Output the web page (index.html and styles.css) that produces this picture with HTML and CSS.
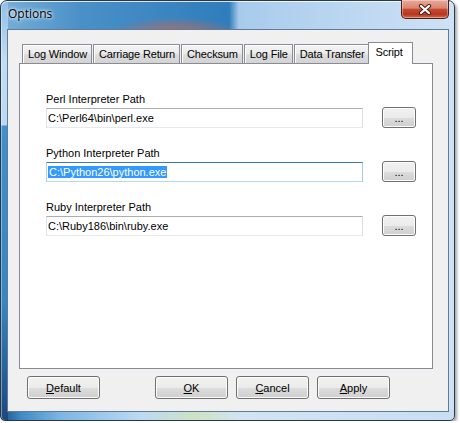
FILE: index.html
```html
<!DOCTYPE html>
<html lang="en">
<head>
    <meta charset="UTF-8">
    <title>Options</title>
    <link rel="stylesheet" href="styles.css">
</head>
<body>
    <div class="window">
        <div class="titlebar">
            <span class="title">Options</span>
            <button class="close" type="button" aria-label="Close">
                <svg width="14" height="11" viewBox="0 0 14 11">
                    <path d="M3 2 L11 9 M11 2 L3 9" stroke="#4a2019" stroke-width="4.2" stroke-linecap="round"/>
                    <path d="M3 2 L11 9 M11 2 L3 9" stroke="#fff" stroke-width="2.2" stroke-linecap="round"/>
                </svg>
            </button>
        </div>

        <div class="client">
            <!-- Tabs -->
            <div class="tab-strip">
                <span class="tab">Log Window</span>
                <span class="tab">Carriage Return</span>
                <span class="tab">Checksum</span>
                <span class="tab">Log File</span>
                <span class="tab">Data Transfer</span>
                <span class="tab active">Script</span>
            </div>

            <div class="panel">
                <div class="field">
                    <label>Perl Interpreter Path</label>
                    <div class="field-row">
                        <div class="textbox">C:\Perl64\bin\perl.exe</div>
                        <button class="btn browse" type="button">...</button>
                    </div>
                </div>
                <div class="field">
                    <label>Python Interpreter Path</label>
                    <div class="field-row">
                        <div class="textbox focused"><span class="selected">C:\Python26\python.exe</span></div>
                        <button class="btn browse" type="button">...</button>
                    </div>
                </div>
                <div class="field">
                    <label>Ruby Interpreter Path</label>
                    <div class="field-row">
                        <div class="textbox">C:\Ruby186\bin\ruby.exe</div>
                        <button class="btn browse" type="button">...</button>
                    </div>
                </div>
            </div>

            <!-- Dialog buttons -->
            <div class="actions">
                <button class="btn btn-default" type="button"><u>D</u>efault</button>
                <button class="btn" type="button"><u>O</u>K</button>
                <button class="btn" type="button"><u>C</u>ancel</button>
                <button class="btn" type="button"><u>A</u>pply</button>
            </div>
        </div>
    </div>
</body>
</html>
```

FILE: styles.css
```css
body {
    margin: 0;
    background: #fff;
    font-family: "Liberation Sans", Arial, sans-serif;
    font-size: 11px;
    color: #000;
}
.window {
    box-sizing: border-box;
    width: 455px;
    height: 421px;
    border: 1px solid #27384a;
    border-radius: 7px 7px 5px 5px;
    padding: 0 5px 8px 6px;
    display: flex;
    flex-direction: column;
    background:
        radial-gradient(ellipse 66px 17px at 175px 33px, rgba(196, 104, 84, 0.95), rgba(196, 104, 84, 0) 100%) 0 0 / 100% 40px no-repeat,
        linear-gradient(to bottom, #8fc0e6 0, #c2ddf2 60px, #bad8f0 124px, #3f90cd 125px, #3686c4 300px, #1c477c 100%) 0 0 / 7px 100% no-repeat,
        linear-gradient(to right, #1f4f86 0, #3f8ac6 20px, #7db6e3 60px, #bcdaf2 140px, #cde2c4 195px, #d2e4f2 240px, #c7def4 100%) 0 100% / 100% 10px no-repeat,
        linear-gradient(to right, #78afd8 0, #4a90c8 80px, #2f7dbc 228px, #a8cbec 238px, #b3d2ef 300px, #cfe2f5 100%);
    box-shadow: inset 0 1px 0 rgba(255, 255, 255, 0.8), inset 1px 0 0 rgba(255, 255, 255, 0.4), 2px 2px 3px rgba(0, 0, 0, 0.35);
}
.titlebar {
    height: 28px;
    display: flex;
    align-items: flex-start;
}
.title {
    font-family: "Open Sans", "Noto Sans", sans-serif;
    font-size: 12px;
    line-height: 16px;
    margin: 5px 0 0 1px;
    text-shadow: 0 0 5px #fff, 0 0 3px rgba(255, 255, 255, 0.9);
}
.close {
    margin: -1px 0 0 auto;
    width: 48px;
    height: 19px;
    padding: 0;
    border: 1px solid #4b1e18;
    border-top: none;
    border-radius: 0 0 5px 5px;
    background: linear-gradient(#e8aa9a 0%, #d98470 45%, #c54a33 52%, #b8361f 80%, #d46c4e 100%);
    box-shadow: inset 0 0 0 1px rgba(255, 255, 255, 0.35);
    display: flex;
    align-items: center;
    justify-content: center;
}
.client {
    flex: 1;
    background: #f0f0f0;
    border: 1px solid #5f7b98;
    padding: 12px 0 0 11px;
    display: flex;
    flex-direction: column;
}
.tab-strip {
    display: flex;
    align-items: flex-end;
    height: 21px;
    padding-left: 3px;
}
.tab {
    box-sizing: border-box;
    height: 19px;
    line-height: 18px;
    padding: 0 4px 0 5px;
    border: 1px solid #898c95;
    border-bottom: none;
    background: linear-gradient(#f3f3f3 0%, #ececec 45%, #dddddd 55%, #d3d3d3 100%);
    box-shadow: inset 1px 1px 0 #fff;
    white-space: nowrap;
    letter-spacing: -0.15px;
}
.tab + .tab {
    margin-left: 1px;
}
.tab.active {
    position: relative;
    z-index: 1;
    height: 22px;
    line-height: 19px;
    margin: 0 0 -1px -1px;
    padding: 0 9px 0 6px;
    background: #fff;
    box-shadow: none;
}
.panel {
    box-sizing: border-box;
    width: 414px;
    height: 306px;
    background: #fff;
    border: 1px solid #898c95;
    padding: 29px 0 0 26px;
    display: flex;
    flex-direction: column;
    gap: 19px;
}
.field label {
    display: block;
    line-height: 13px;
    margin-bottom: 1px;
}
.field-row {
    display: flex;
    align-items: center;
    gap: 19px;
}
.textbox {
    box-sizing: border-box;
    width: 317px;
    height: 20px;
    line-height: 18px;
    padding: 0 1px;
    border: 1px solid;
    border-color: #abadb3 #dbdfe6 #e3e9ef #e2e3ea;
    background: #fff;
    white-space: nowrap;
}
.textbox.focused {
    border-color: #3d7bad #a4c9e3 #b7d9ed #b5cfe7;
}
.selected {
    background: #3399ff;
    color: #fff;
    padding: 0 1px;
}
.btn {
    box-sizing: border-box;
    width: 73px;
    height: 23px;
    padding: 0;
    border: 1px solid #707070;
    border-radius: 3px;
    background: linear-gradient(#f2f2f2 0%, #ebebeb 50%, #dddddd 51%, #cfcfcf 100%);
    box-shadow: inset 0 0 0 1px #fcfcfc;
    font: 11px "Liberation Sans", Arial, sans-serif;
    color: #000;
}
.btn.browse {
    width: 34px;
    height: 21px;
}
.actions {
    display: flex;
    gap: 8px;
    margin-top: 7px;
    padding-left: 8px;
}
.btn-default {
    margin-right: 47px;
}
```
